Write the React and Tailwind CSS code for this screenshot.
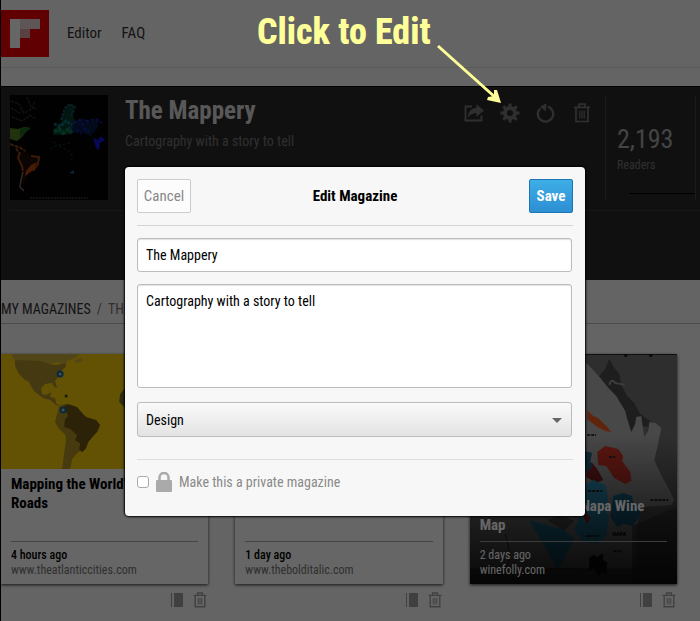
import { useState } from 'react';

const fontClass = "font-['Roboto_Condensed','Arial_Narrow','Liberation_Sans',sans-serif]";
const fieldClass =
  'block w-full rounded-[3px] border border-[#bcbcbc] bg-white px-2 text-sm leading-5 text-black shadow-[inset_0_1px_1px_rgba(0,0,0,0.12)]';

function Logo() {
  return (
    <svg viewBox="0 0 48 47" className="h-[47px] w-12">
      <rect width="48" height="47" fill="#f00008" />
      <path d="M9 9h10v29H9z" fill="#fff" />
      <path d="M19 9h20v10H19z" fill="#ecd7d8" />
      <path d="M19 19h10v9H19z" fill="#dfa3a8" />
    </svg>
  );
}

function ShareIcon() {
  return (
    <svg viewBox="0 0 20 20" className="size-5" fill="none" stroke="currentColor" strokeWidth="1.800">
      <path d="M8 3.500H1.500v14h16v-5" />
      <path d="M4 14.500c.3-5.800 3-9.300 8.500-9.500V1.500l7.500 6-7.500 6V10c-3.800 0-6.300 1.500-8.500 4.500z" fill="currentColor" stroke="none" />
    </svg>
  );
}

function GearIcon() {
  return (
    <svg viewBox="0 0 20 20" className="size-5" fill="none" stroke="currentColor">
      <circle cx="10" cy="10" r="5" strokeWidth="4" />
      <path
        d="M10 .5v4M10 15.500v4M.5 10h4M15.500 10h4M3.300 3.300l2.800 2.800M13.900 13.900l2.800 2.800M3.300 16.700l2.800-2.800M13.900 6.100l2.800-2.800"
        strokeWidth="3"
      />
    </svg>
  );
}

function ResetIcon() {
  return (
    <svg viewBox="0 0 20 20" className="size-5" fill="none" stroke="currentColor" strokeWidth="2.300">
      <path d="M4.200 5.300A7.700 7.700 0 1 0 12 3.600" />
      <path d="M4 3.800 10.500.3l-.6 8z" fill="currentColor" stroke="none" />
    </svg>
  );
}

function TrashIcon({ className }) {
  return (
    <svg viewBox="0 0 20 20" className={className} fill="none" stroke="currentColor" strokeWidth="1.700">
      <path d="M2 4.300h16M7 4V1.200h6V4M4 4.500V18.500h12V4.500" />
      <path d="M7.800 7.500v8M10 7.500v8M12.200 7.500v8" strokeWidth="1.200" />
    </svg>
  );
}

function CoverIcon() {
  return (
    <svg viewBox="0 0 14 16" className="h-4 w-3.5" fill="currentColor">
      <path d="M1 1h1v14H1zM4 1h9v14H4z" />
    </svg>
  );
}

function CoverMap() {
  return (
    <svg viewBox="0 0 98 105" className="h-[105px] w-[98px] shrink-0" fill="none">
      <rect width="98" height="105" fill="#030303" />
      <path
        d="M1 6l8 3 5 9 8-4 3-8M2 22l10 4 8-5M1 13l9 5M17 2l4 10 6 2M19 20l7 4"
        stroke="#2a302e"
        strokeWidth="1.500"
        strokeDasharray="3 1"
      />
      <path d="M0 33l8 1 6-2 6 1-5 5-3 4-5 4-7-2z" fill="#4c7d1c" />
      <path d="M10 34l9-2 1 2-6 4-4 5z" fill="#1d6423" />
      <path d="M1 36h9M1 40h7" stroke="#7c8a20" strokeDasharray="2 1" />
      <path d="M0 49l5 2 4 1 5 3 2 4M6 53l3 5 3 4" stroke="#8a4314" strokeWidth="2" strokeDasharray="4 1" />
      <path d="M10 58l5-2 6 5 8 1-1 7-5 7-6 4-2 6-2 4-1-9-1-9-3-7z" fill="#1a0d06" />
      <path d="M10 57l-2 6 4 8 1 5M21 61l8 1-1 7-5 7" stroke="#9c3f12" strokeWidth="2" />
      <path d="M16 76l5-6 6-3-3 7-6 5-3 2z" fill="#b8430f" />
      <path d="M13 77l-2 8-1 7 4 4" stroke="#7a6455" strokeWidth="1.500" />
      <path d="M43 40l1-6 7-6 2-9 6-10 5 2-2 9 3 5-2 7-5 8z" fill="#0c5b4c" opacity=".6" />
      <path d="M63 27l8-4 9 3 9-1-2 9-7 7-8-4-7 1-6-4z" fill="#0b2f8a" opacity=".5" />
      <path d="M44 37l5-3 4 4 6-4 3 5" stroke="#128a52" strokeWidth="4" strokeDasharray="4 1" opacity=".8" />
      <path d="M44 29l7 2 5-5 6 4" stroke="#10808a" strokeWidth="3" strokeDasharray="3 1" opacity=".8" />
      <path d="M51 25l4-12 5-4 5 3-4 10" stroke="#15535e" strokeDasharray="3 1" strokeWidth="2" />
      <path d="M64 28l6-3 4 8 5 4M66 35l6 4M76 26l10-2 6 4" stroke="#1a26c8" strokeWidth="2" strokeDasharray="3 2" opacity=".8" />
      <path d="M83 43l5 2 3-4 4 4-5 3-1 7-3-2z" fill="#1414d8" />
      <path d="M40 54l7-4 11 5 5 7-4 6M43 47l8 3 9-2" stroke="#14343a" strokeDasharray="3 2" />
      <path d="M59 78l5-3v4z" fill="#105680" />
      <path d="M20 103h58" stroke="#555" strokeDasharray="2 1" />
    </svg>
  );
}

function RoadsMap() {
  return (
    <svg viewBox="0 0 207 115" preserveAspectRatio="xMinYMin slice" className="block h-[115px] w-full bg-[#f7cd0a]">
      <path d="M10 0h68l-4 4-6 2-5 4-6-2-10 3-12-4H14z" fill="#c9ae3a" />
      <path d="M73 7l6-3 3 2-5 3z" fill="#c9ae3a" />
      <path
        d="M14 6l25 1 9 3 6 1 11-2-1 5-4 3-3 6-3 4 2 7-3-1-2-4-7 1-4 4 1 6 4 1 5-3-1 5 5 1 1 5 4 3-4-1-6-5-7-2-8-6-7-9-9-9-4-8z"
        fill="#ad902c"
      />
      <path d="M24 26l5 8 3 2-4-8z" fill="#f7cd0a" />
      <path d="M58 52l6-2 6 2 6 10 10 8 1 12-4 12-7 5-5 6-2 10h-8l2-16 2-13-1-6-6-5-4-7z" fill="#ae9225" />
      <path d="M63 52l4-2 9 3 5 6 4 4 10 3 4 5-3 7-4 4-5 6-2 6-4 4-3-3 1-6-5-3 2-5-7-6-6-2 1-8 3-3z" fill="#6d5614" />
      <path d="M124 34l-5 6-1 8 6 6z" fill="#706b28" />
      <circle cx="65" cy="42" r="1.500" fill="#3b3a1a" />
      <circle cx="59" cy="20" r="2.500" fill="#bbb" stroke="#126698" strokeWidth="2" />
      <circle cx="62" cy="56" r="2.500" fill="#bbb" stroke="#126698" strokeWidth="2" />
    </svg>
  );
}

function WineMap() {
  return (
    <svg viewBox="0 0 207 230" preserveAspectRatio="xMidYMid slice" className="absolute inset-0 size-full">
      <defs>
        <linearGradient id="fade" x1="0" x2="0" y1="0" y2="1">
          <stop offset=".35" stopColor="#000" stopOpacity="0" />
          <stop offset=".75" stopColor="#000" stopOpacity=".62" />
          <stop offset="1" stopColor="#000" stopOpacity=".88" />
        </linearGradient>
      </defs>
      <rect width="207" height="230" fill="#747474" />
      <path d="M139 5l5 9 5 6 2 11 6 11 7 7 6 11 20 14-20-2-18 14-16-36-15-18 14-17z" fill="#4c4c4c" />
      <path
        d="M0 0h105l12 10 13 14 8 10 8 8 9 15 2 8 4 13 4-8 1-7 5-1 1 8 2 13 4-6 1-9 6 1 6 5-2 10-5 22 3 7 6 12 5 9 6 12-3 5-28 2-6 16v45H0z"
        fill="#b4b4b4"
      />
      <path d="M117 56l6 6 5 2 9 9 4 5-6-1-8-4-10-8z" fill="#f15b22" />
      <path d="M127 98l8-6 13 3 5 7-1 5 8 11 1 9-6 3-11-6-8-12-8-1z" fill="#e5392b" />
      <path d="M116 107l6 2 5 6 6 11-7 3-10-6z" fill="#9b252b" />
      <path d="M115 97l7 2-2 8 2 6-7 6z" fill="#27708d" />
      <path d="M113 132l10-6 12 5 3 13-2 11 3 9-3 18-8 8-16-2-8-12 5-13z" fill="#37b7ea" />
      <path d="M143 142l10-3 9 3 1 8 6 1 2 10-9 11-8-2-7 3-7-10z" fill="#2586b2" />
      <path d="M59 166l35 10 10 9-16 31z" fill="#2caee0" />
      <path d="M77 166l14-5 13 6-10 10z" fill="#777" />
      <path d="M116 158l4 6-3 6-4-8z" fill="#d72f29" />
      <path d="M119 204l5-4 2 3 7-4v7l4 2-1 12-5-3-2 5-5-8-5 2z" fill="#191919" />
      <path d="M162 172l45-20v78h-45z" fill="#4f4f4f" opacity=".7" />
      <path d="M118 137h14M116 182h13M180 146h18M117 81h9M139 103h6M143 197h9" stroke="#333" strokeWidth="2" strokeDasharray="3 1" />
      <path d="M139 31q2-7 6-2l9 2" stroke="#999" strokeWidth="2" fill="none" />
      <path d="M35 180q9 27 0 33M56 220q40-12 86 1" stroke="#6a4511" fill="none" />
      <text x="142" y="182" fontSize="6" fontWeight="bold" fill="#000">NAPA</text>
      <rect width="207" height="230" fill="url(#fade)" />
      <path d="M154 0h3v3h-3zM179 0h3v3h-3zM0 0h207v1H0z" fill="#111" />
    </svg>
  );
}

function CardActions() {
  return (
    <div className="flex justify-end gap-2 pt-2 text-[#a0a0a0]">
      <button type="button" aria-label="Set as cover"><CoverIcon /></button>
      <button type="button" aria-label="Delete article"><TrashIcon className="size-4" /></button>
    </div>
  );
}

function ArticleCard({ title, age, site, picture, dark }) {
  return (
    <article>
      <div
        className={`relative flex h-[230px] flex-col overflow-hidden shadow-[0_1px_3px_rgba(0,0,0,0.8)] ${
          dark ? 'bg-black text-white' : 'bg-white text-black'
        }`}
      >
        {picture}
        <div className="relative flex flex-1 flex-col justify-between px-2.5 pt-1.5 pb-1.5">
          <h2 className={`text-[15px] leading-[19px] font-bold ${dark ? 'mt-auto pb-1.5' : 'pr-8'}`}>{title}</h2>
          <div className={`border-t pt-1.5 text-xs leading-[15px] ${dark ? 'border-[#999]' : 'border-[#aaa]'}`}>
            <p className={dark ? '' : 'font-medium'}>{age}</p>
            <a href="#article" className={dark ? '' : 'text-[#777]'}>{site}</a>
          </div>
        </div>
      </div>
      <CardActions />
    </article>
  );
}

function MagazinePage() {
  return (
    <div className="min-h-screen overflow-hidden border-l border-black bg-[#fafafa]">
      <header className="flex items-center border-b border-[#dedede] pt-2.5 pb-2.5">
        <a href="#home" aria-label="Home"><Logo /></a>
        <nav className="flex gap-5 pl-[18px] text-[15px] text-[#333]">
          <a href="#editor">Editor</a>
          <a href="#faq">FAQ</a>
        </nav>
      </header>

      <section className="mt-[18px] h-[194px] border-t border-black bg-[#2a2a2a] pt-2 pl-[9px]">
        <div className="flex gap-[17px] border-b border-[#3a3a3a] pb-2.5">
          <CoverMap />
          <div className="flex-1">
            <h1 className="text-[25px] leading-8 font-bold text-[#ddd]">The Mappery</h1>
            <p className="pt-1 text-sm leading-5 text-[#777]">Cartography with a story to tell</p>
          </div>
          <div className="flex items-start gap-4 pt-2 text-[#777]">
            <button type="button" aria-label="Share"><ShareIcon /></button>
            <button type="button" aria-label="Edit"><GearIcon /></button>
            <button type="button" aria-label="Refresh"><ResetIcon /></button>
            <button type="button" aria-label="Delete"><TrashIcon className="size-5" /></button>
          </div>
          <div className="mr-1 -ml-1 w-[91px] border-x border-[#444] pt-7 pl-[11px]">
            <p className="text-[26px] leading-8 text-[#aaa]">2,193</p>
            <p className="pt-0.5 text-xs leading-4 text-[#777]">Readers</p>
            <div className="mt-5 ml-3 border-t border-black" />
          </div>
        </div>
      </section>

      <nav className="flex h-11 items-end gap-1.5 border-b border-[#bbb] pb-1 text-sm text-[#777]">
        <a href="#magazines" className="text-[#333]">MY MAGAZINES</a>
        <span>/</span>
        <span>THE MAPPERY</span>
      </nav>

      <main className="grid grid-cols-3 gap-[27px] pt-[30px] pr-[23px]">
        <ArticleCard
          title="Mapping the World's Roads"
          age="4 hours ago"
          site="www.theatlanticcities.com"
          picture={<RoadsMap />}
        />
        <ArticleCard age="1 day ago" site="www.thebolditalic.com" />
        <ArticleCard
          dark
          title={<span className="block"><span className="block pl-[101px]">Napa Wine</span>Map</span>}
          age="2 days ago"
          site="winefolly.com"
          picture={<WineMap />}
        />
      </main>
    </div>
  );
}

function EditDialog() {
  const [name, setName] = useState('The Mappery');
  const [description, setDescription] = useState('Cartography with a story to tell');
  const [isPrivate, setIsPrivate] = useState(false);

  return (
    <form
      role="dialog"
      aria-labelledby="dialog-title"
      onSubmit={(e) => e.preventDefault()}
      className="w-full max-w-[460px] rounded-[4px] bg-[#f7f7f7] px-3 pt-3 pb-6 shadow-[0_0_2px_1px_#000]"
    >
      <div className="grid grid-cols-[1fr_auto_1fr] items-center border-b border-[#d4d4d4] pb-3">
        <button type="button" className="h-[34px] w-[54px] rounded-[2px] border border-[#ccc] bg-[#fcfcfc] text-[15px] text-[#888]">
          Cancel
        </button>
        <h2 id="dialog-title" className="text-[15px] font-bold text-black">Edit Magazine</h2>
        <button
          type="submit"
          className="h-[34px] w-11 justify-self-end rounded-[2px] border border-[#1c75b5] bg-linear-to-b from-[#3eaee6] to-[#2d8fd3] text-[15px] font-bold text-white"
        >
          Save
        </button>
      </div>

      <div className="space-y-3 pt-3 pr-px">
        <input
          aria-label="Magazine title"
          value={name}
          onChange={(e) => setName(e.target.value)}
          className={`${fieldClass} h-[34px]`}
        />
        <textarea
          aria-label="Description"
          value={description}
          onChange={(e) => setDescription(e.target.value)}
          className={`${fieldClass} h-[104px] resize-none py-1.5`}
        />
        <div className="relative pt-0.5">
          <select
            aria-label="Category"
            className="block h-[35px] w-full appearance-none rounded-[3px] border border-[#bcbcbc] bg-linear-to-b from-[#fafafa] to-[#e3e3e3] px-2 text-sm text-black"
          >
            <option>Design</option>
          </select>
          <svg viewBox="0 0 10 5" className="pointer-events-none absolute top-[18px] right-2.5 h-[5px] w-2.5">
            <path d="M0 0h10L5 5z" fill="#666" />
          </svg>
        </div>
      </div>

      <div className="mt-[22px] flex items-center border-t border-[#ddd] pt-3">
        <input
          id="private"
          type="checkbox"
          checked={isPrivate}
          onChange={(e) => setIsPrivate(e.target.checked)}
          className="size-3 appearance-none rounded-[3px] border border-[#aaa] bg-white checked:bg-[#2d8fd3]"
        />
        <label htmlFor="private" className="flex items-center gap-[7px] pl-[7px] text-sm leading-5 text-[#8a8a8a]">
          <svg viewBox="0 0 16 20" className="h-5 w-4">
            <path d="M3.500 10V5.500a4.500 4.500 0 0 1 9 0V10" fill="none" stroke="#aaa" strokeWidth="2.500" />
            <rect y="8" width="16" height="12" rx="1" fill="#aaa" />
          </svg>
          Make this a private magazine
        </label>
      </div>
    </form>
  );
}

export default function App() {
  return (
    <div className={`relative ${fontClass}`}>
      <MagazinePage />
      <div className="absolute inset-0 flex items-start justify-center bg-black/60 pt-[167px] pl-2.5">
        <EditDialog />
      </div>
      <p className="pointer-events-none absolute top-3 left-[257px] text-[36px] leading-10 font-extrabold whitespace-nowrap text-[#ffff99]">
        Click to Edit
      </p>
      <svg viewBox="0 0 66 60" className="pointer-events-none absolute top-[44px] left-[436px] h-[60px] w-[66px]">
        <path d="M2 2l58 52" fill="none" stroke="#ffff99" strokeWidth="3" />
        <path d="M65 59l-14-3 1-3 6-1 0-6 3 0z" fill="#ffff99" />
      </svg>
    </div>
  );
}
